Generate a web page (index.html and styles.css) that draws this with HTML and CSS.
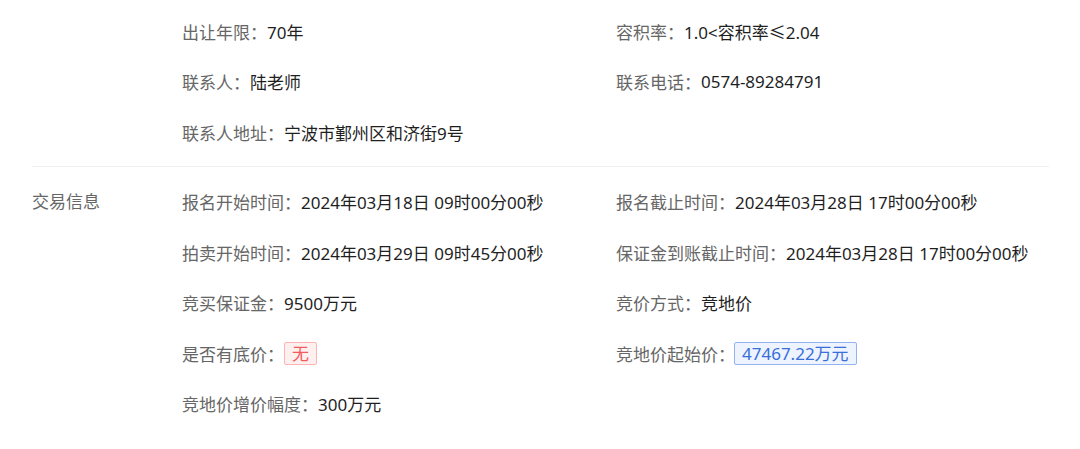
FILE: index.html
```html
<!DOCTYPE html>
<html lang="zh-CN">
<head>
<meta charset="utf-8">
<link rel="stylesheet" href="styles.css">
</head>
<body>
<div class="page">
  <section class="section section-top">
    <div class="section-title"></div>
    <div class="grid">
      <div class="item"><span class="label">出让年限：</span><span class="value">70年</span></div>
      <div class="item"><span class="label">容积率：</span><span class="value">1.0&lt;容积率≤2.04</span></div>
      <div class="item"><span class="label">联系人：</span><span class="value">陆老师</span></div>
      <div class="item"><span class="label">联系电话：</span><span class="value">0574-89284791</span></div>
      <div class="item full"><span class="label">联系人地址：</span><span class="value">宁波市鄞州区和济街9号</span></div>
    </div>
  </section>
  <div class="divider"></div>
  <section class="section section-trade">
    <div class="section-title">交易信息</div>
    <div class="grid">
      <div class="item"><span class="label">报名开始时间：</span><span class="value">2024年03月18日 09时00分00秒</span></div>
      <div class="item"><span class="label">报名截止时间：</span><span class="value">2024年03月28日 17时00分00秒</span></div>
      <div class="item"><span class="label">拍卖开始时间：</span><span class="value">2024年03月29日 09时45分00秒</span></div>
      <div class="item"><span class="label">保证金到账截止时间：</span><span class="value">2024年03月28日 17时00分00秒</span></div>
      <div class="item"><span class="label">竞买保证金：</span><span class="value">9500万元</span></div>
      <div class="item"><span class="label">竞价方式：</span><span class="value">竞地价</span></div>
      <div class="item"><span class="label">是否有底价：</span><span class="tag tag-red">无</span></div>
      <div class="item"><span class="label">竞地价起始价：</span><span class="tag tag-blue">47467.22万元</span></div>
      <div class="item full"><span class="label">竞地价增价幅度：</span><span class="value">300万元</span></div>
    </div>
  </section>
</div>
</body>
</html>
```
FILE: styles.css
```css
html, body {
  margin: 0;
  padding: 0;
  background: #ffffff;
}

body {
  font-family: "Noto Sans", "Noto Sans CJK SC", sans-serif;
  font-size: 17px;
  color: #333333;
}

.page {
  width: 1016px;
  margin-left: 32px;
}

.section {
  display: flex;
}

.section-top {
  padding-top: 6px;
  padding-bottom: 8px;
}

.section-trade {
  padding-top: 10px;
}

.section-title {
  width: 150px;
  flex: none;
  color: #666666;
  line-height: 24.5px;
  padding-top: 13px;
}

.grid {
  flex: 1;
  display: grid;
  grid-template-columns: 434px 1fr;
}

.item {
  display: flex;
  align-items: center;
  height: 50.5px;
  white-space: nowrap;
}

.item.full {
  grid-column: 1 / span 2;
}

.label {
  color: #666666;
}

.value {
  color: #1f1f1f;
}

.divider {
  height: 1px;
  background: #f0f0f0;
  margin-right: -1px;
}

.tag {
  display: inline-block;
  border: 1px solid;
  border-radius: 2px;
  line-height: 21px;
  padding: 0 7px;
}

.tag-red {
  color: #f25b5b;
  border-color: #ffb3b3;
  background: #fff0f0;
}

.tag-blue {
  color: #3a6ed8;
  border-color: #93b3f0;
  background: #edf3ff;
  margin-left: -1px;
}
```
